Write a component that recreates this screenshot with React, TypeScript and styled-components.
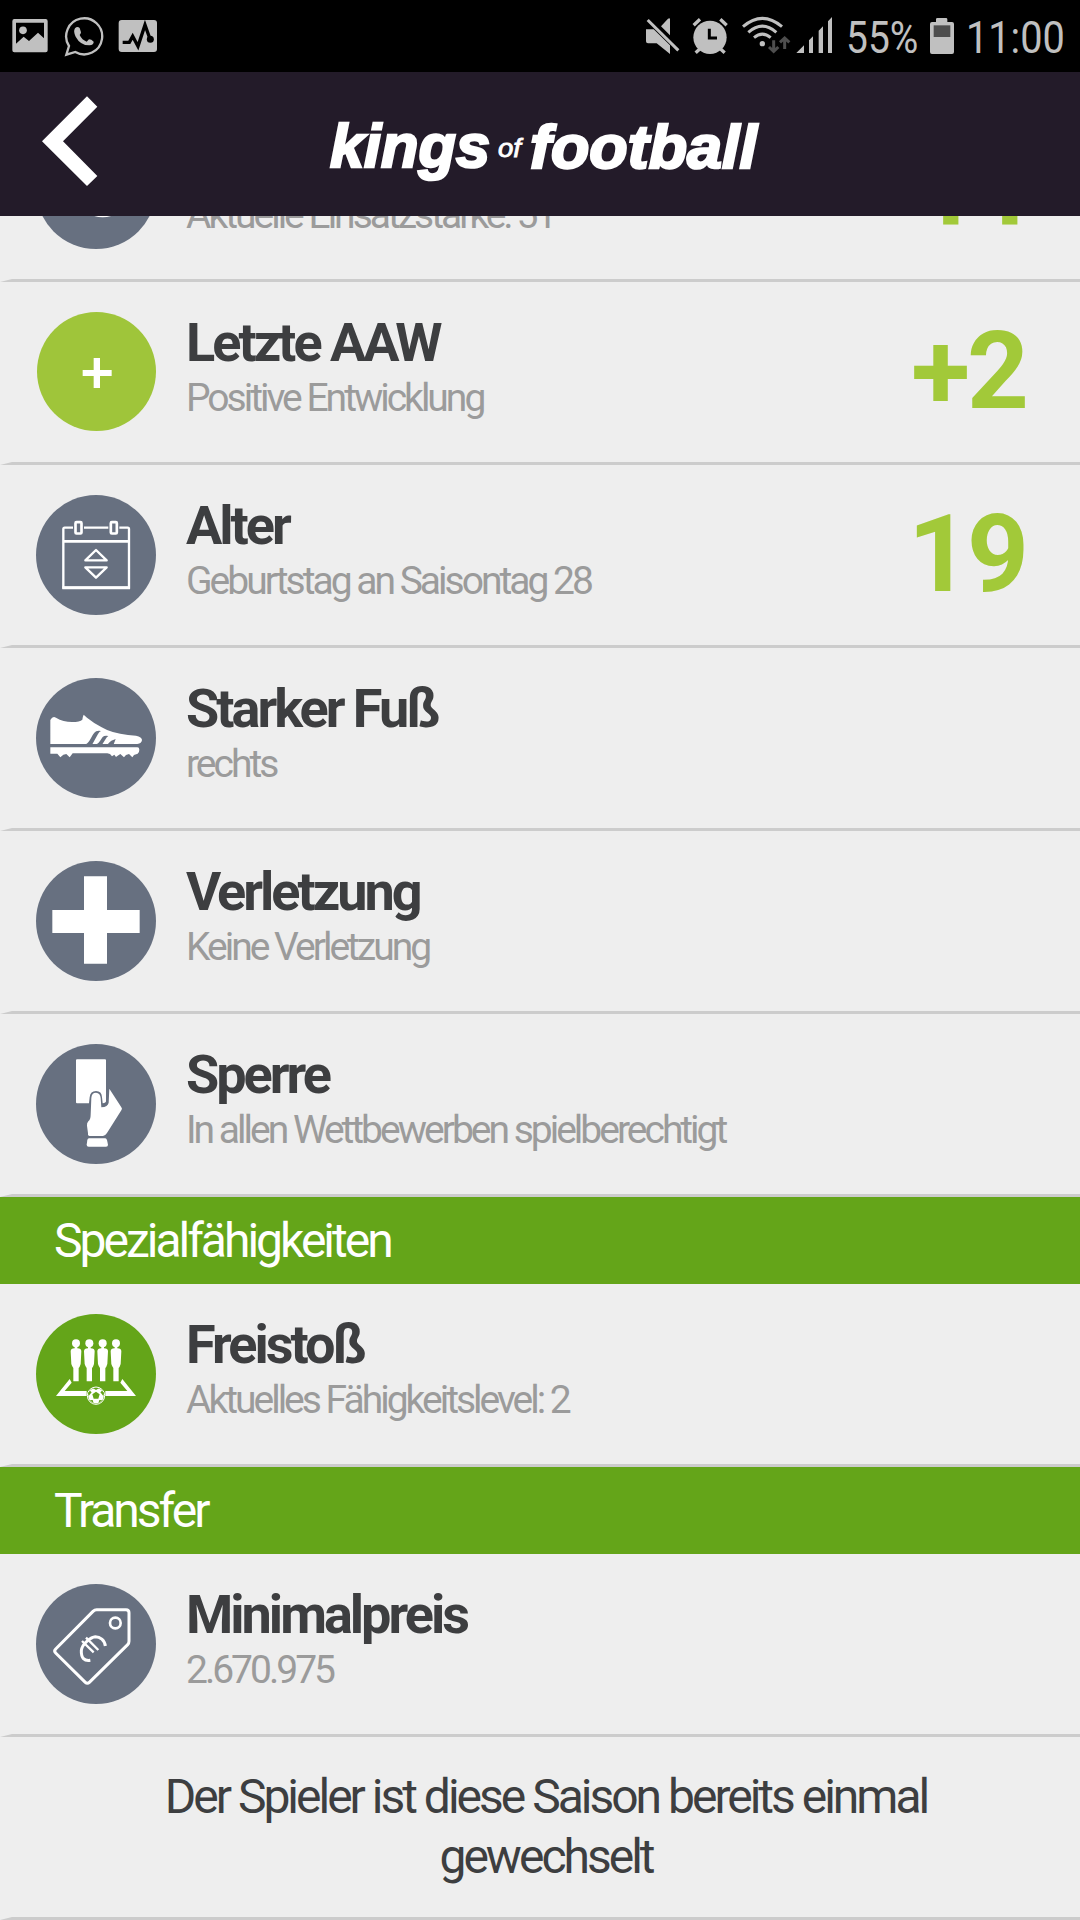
import React from "react";
import styled, { createGlobalStyle } from "styled-components";

const GlobalStyle = createGlobalStyle`
  html, body { margin: 0; padding: 0; background: #eeeeee; }
  * { box-sizing: border-box; }
`;

const Screen = styled.div`
  width: 1080px;
  height: 1920px;
  display: flex;
  flex-direction: column;
  overflow: hidden;
  background: #eeeeee;
  font-family: Roboto, "Liberation Sans", sans-serif;
`;

const StatusBar = styled.div`
  height: 72px;
  flex: none;
  display: flex;
  justify-content: space-between;
  padding: 0 14px 0 12px;
  background: #000;
  color: #c0c0c0;
`;

const StatusGroup = styled.div`
  display: flex;
`;

const StatusIcon = styled.svg<{ $gap?: number }>`
  display: block;
  height: 72px;
  margin-left: ${(p) => p.$gap ?? 0}px;
`;

const StatusText = styled.div<{ $width: number; $gap: number; $scale: number }>`
  width: ${(p) => p.$width}px;
  margin-left: ${(p) => p.$gap}px;
  font-size: 45px;
  line-height: 75px;
  white-space: nowrap;
  span {
    display: inline-block;
    transform: scaleX(${(p) => p.$scale});
    transform-origin: 0 50%;
  }
`;

const Header = styled.header`
  height: 144px;
  flex: none;
  display: flex;
  align-items: center;
  background: #231b29;
`;

const BackArrow = styled.svg`
  display: block;
  width: 60px;
  height: 144px;
  margin-left: 40px;
`;

const Logo = styled.svg`
  display: block;
  width: 450px;
  height: 144px;
  margin-left: 220px;
`;

const List = styled.main`
  flex: 1;
  min-height: 0;
  display: flex;
  flex-direction: column;
  justify-content: flex-end;
  overflow: hidden;
`;

const Row = styled.section`
  flex: none;
  height: 183px;
  display: flex;
  padding: 30px 54px 0 24px;
  border-left: 12px solid transparent;
  border-bottom: 3px solid #cccccc;
`;

const Badge = styled.svg`
  display: block;
  flex: none;
  width: 120px;
  height: 120px;
`;

const Texts = styled.div`
  flex: 1;
  display: flex;
  flex-direction: column;
  justify-content: flex-end;
  height: 110px;
  padding-left: 30px;
  letter-spacing: -3px;
  white-space: nowrap;
`;

const Title = styled.h2`
  margin: 0 0 1px;
  font-size: 54px;
  line-height: 60px;
  font-weight: 700;
  color: #3d3e40;
`;

const Subtitle = styled.div`
  font-size: 39px;
  line-height: 48px;
  color: #9b9b9b;
`;

const Value = styled.div`
  font-size: 108px;
  line-height: 118px;
  font-weight: 700;
  letter-spacing: -3px;
  color: #a2c939;
`;

const SectionBar = styled.div`
  flex: none;
  height: 87px;
  padding-left: 54px;
  font-size: 48px;
  line-height: 87px;
  letter-spacing: -3px;
  color: #fff;
  background: #64a519;
`;

const Message = styled.section`
  flex: none;
  height: 183px;
  padding: 30px 90px 0;
  border-left: 12px solid transparent;
  border-bottom: 3px solid #cccccc;
  font-size: 48px;
  line-height: 60px;
  letter-spacing: -3px;
  text-align: center;
  color: #3d3e40;
`;

const SLATE = "#677080";

type BadgeProps = { color?: string; children: React.ReactNode };

function RoundBadge({ color = SLATE, children }: BadgeProps) {
  return (
    <Badge viewBox="0 0 360 360">
      <circle cx="180" cy="180" r="180" fill={color} />
      {children}
    </Badge>
  );
}

const StrengthIcon = () => (
  <RoundBadge>
    <ellipse cx="200" cy="215" rx="66" ry="50" fill="#fff" />
  </RoundBadge>
);

const PlusIcon = () => (
  <Badge viewBox="0 0 360 360">
    <circle cx="181.500" cy="178.500" r="178.500" fill="#9fc53a" />
    <path d="M173 138h19v36h35v18h-35v36h-19v-36h-33v-18h33z" fill="#fff" />
  </Badge>
);

const CalendarIcon = () => (
  <RoundBadge>
    <g fill="none" stroke="#fff" strokeWidth="7">
      <path d="M111 98H86Q82 98 82 102V278H279V102Q279 98 275 98H250M144 98H217" />
      <path d="M82 139H279" strokeWidth="8" />
      <path d="M79 278H282" strokeWidth="9" />
      <rect x="118.500" y="81.500" width="18" height="34" rx="3" strokeWidth="8" />
      <rect x="224.500" y="81.500" width="18" height="34" rx="3" strokeWidth="8" />
      <path d="M180 165L212 196H148ZM180 248L212 217H148Z" strokeLinejoin="round" />
    </g>
  </RoundBadge>
);

const ShoeIcon = () => (
  <RoundBadge>
    <g transform="translate(-108 -84)">
      <path
        fill="#fff"
        d="M151 282V210Q158 197 168 203Q190 216 216 216Q240 216 247 209Q248 200 251 194L261 203Q285 222 305 232Q335 250 384 255L408 257Q426 261 426 270Q425 280 412 282Z"
      />
      <path
        fill={SLATE}
        d="M257 283C269 277 275 257 283 248Q288 241 303 243Q298 245 294 252L277 283ZM290 283C299 278 303 267 308 261Q313 256 325 258Q320 261 317 267L307 283ZM323 283Q329 276 334 272L347 267L341 283Z"
      />
      <path
        fill="#fff"
        d="M151 292H412Q418 292 418 299Q418 308 413 311L402 315L397 322L387 312L378 315L372 322L361 312L353 317L348 321L343 314L336 319L330 312L322 310H218L209 322L199 312L190 314L181 322L172 311H151Z"
      />
    </g>
  </RoundBadge>
);

const CrossIcon = () => (
  <RoundBadge>
    <path d="M144 46h69v101h98v69h-98v92h-69v-92H49v-69h95z" fill="#fff" />
  </RoundBadge>
);

const CardIcon = () => (
  <RoundBadge>
    <g transform="translate(-108 -102)" fill="#fff">
      <path d="M231 148H315Q318 148 318 151V274Q318 279 308 280L306 262Q305 243 288 243Q271 243 269 262L267 280H231Q228 280 228 277V151Q228 148 231 148Z" />
      <path d="M274 264Q275 248 288 248Q301 249 302 264L304 292Q324 290 326 278L328 236L364 292Q368 296 364 301L321 369Q315 378 309 378H269Q263 378 264 370L261 347Q260 339 265 334Q272 328 272 314Z" />
      <path d="M267 385H316Q319 385 321 390L324 404Q324 410 318 410H266Q260 410 260 404L262 390Q263 385 267 385Z" />
    </g>
  </RoundBadge>
);

const WallIcon = () => (
  <RoundBadge color="#64a519">
    {[120, 160, 200, 240].map((x) => (
      <g key={x} fill="#fff" transform={`translate(${x} 0)`}>
        <circle cx="0" cy="88" r="12" />
        <path d="M-4 96H4V103Q16 103 16 112L14 150Q11 160 8 162V202H-8V162Q-12 157 -14 150L-16 112Q-16 103 -4 103Z" />
      </g>
    ))}
    <path fill="#fff" d="M101 195L107 206L86 231H152V246H60ZM259 195L253 206L274 231H208V246H300Z" />
    <circle cx="180" cy="245" r="25" fill="#fff" stroke="#64a519" strokeWidth="3" />
    <circle cx="180" cy="245" r="26" fill="none" stroke="#fff" strokeWidth="3" />
    <path
      fill="#64a519"
      d="M180 233L191 241L187 254H173L169 241ZM170 222H190L180 228ZM156 237L162 230L167 235L158 246ZM204 237L198 230L193 235L202 246ZM161 259L170 258L173 268ZM199 259L190 258L187 268Z"
    />
  </RoundBadge>
);

const TagIcon = () => (
  <RoundBadge>
    <g transform="translate(-108 -372)" fill="none" stroke="#fff" strokeWidth="9">
      <path d="M290 449H378Q387 449 387 458V544Q387 550 383 554L268 667Q262 673 256 667L167 579Q161 573 167 567L279 454Q284 449 290 449Z" />
      <circle cx="346" cy="489" r="16" strokeWidth="8" />
      <path
        strokeWidth="9"
        d="M316 558C314 540 300 530 286 530C274 531 246 550 244 572C243 594 253 604 271 601"
      />
      <path strokeWidth="7" d="M246 543L281 577M258 533L295 570" />
    </g>
  </RoundBadge>
);

type EntryProps = { icon: React.ReactNode; title?: string; subtitle: string; value?: string };

function Entry({ icon, title, subtitle, value }: EntryProps) {
  return (
    <Row>
      {icon}
      <Texts>
        {title && <Title>{title}</Title>}
        <Subtitle>{subtitle}</Subtitle>
      </Texts>
      {value && <Value>{value}</Value>}
    </Row>
  );
}

function AndroidStatus() {
  return (
    <StatusBar>
      <StatusGroup>
        <StatusIcon width="36" viewBox="36 0 108 216" fill="#c0c0c0">
          <path
            fillRule="evenodd"
            d="M43 57H137Q143 57 143 64V151Q143 157 137 157H43Q37 157 37 151V64Q37 57 43 57ZM48 68V131L71 110L87 123L114 98L132 115V68Z"
          />
          <circle cx="69" cy="91" r="11.500" />
        </StatusIcon>
        <StatusIcon $gap={16} width="40" viewBox="192 0 120 216" fill="#c0c0c0">
          <path d="M207 138A54 54 0 1 1 226 156L199 164Z" fill="none" stroke="#c0c0c0" strokeWidth="7" />
          <path d="M225 85Q232 77 239 84L243 97Q243 101 239 105Q246 120 260 125L267 118Q274 118 281 125Q282 134 268 136Q241 136 227 110Q219 94 225 85Z" />
        </StatusIcon>
        <StatusIcon $gap={14} width="40" viewBox="354 0 120 216">
          <rect x="356" y="60" width="115" height="96" rx="9" fill="#c0c0c0" />
          <path d="M368 127H388L398 109L414 139L435 75L450 117" fill="none" stroke="#000" strokeWidth="10" />
          <circle cx="451" cy="118" r="10.500" />
        </StatusIcon>
      </StatusGroup>
      <StatusGroup>
        <StatusIcon width="34" viewBox="78 0 102 216" fill="#c0c0c0">
          <path d="M78 88H101L150 136V162L110 130H84Q78 130 78 124ZM123 79L144 56Q150 52 150 58V106Z" />
          <path d="M83 60L175 151" stroke="#c0c0c0" strokeWidth="9" />
        </StatusIcon>
        <StatusIcon $gap={12} width="36" viewBox="216 0 108 216" fill="#c0c0c0">
          <circle cx="270" cy="112" r="50" />
          <path d="M221 76L240 58M320 76L301 58M227 158L240 146M314 158L301 146" stroke="#c0c0c0" strokeWidth="10" />
          <path d="M268 86V114H291" fill="none" stroke="#000" strokeWidth="9" />
        </StatusIcon>
        <StatusIcon $gap={14} width="49" viewBox="366 0 147 216" fill="none" stroke="#c0c0c0" strokeWidth="9">
          <path d="M369 80Q427 30 486 80M385 97Q427 60 469 97M402 113Q427 92 452 113" />
          <circle cx="427" cy="131" r="8" fill="#c0c0c0" stroke="none" />
          <path d="M461 121V152M447 141L461 154L475 141M494 147V116M480 127L494 114L508 127" stroke="#4e4e4e" />
        </StatusIcon>
        <StatusIcon $gap={5} width="37" viewBox="528 0 111 216" fill="#c0c0c0">
          <path d="M529 159L552 136V159ZM567 159V121L579 109V159ZM596 159V92L609 79V159ZM624 159V64L636 51V159Z" />
        </StatusIcon>
        <StatusText $gap={13} $width={83} $scale={0.865}>
          <span>55%</span>
        </StatusText>
        <StatusIcon width="26" viewBox="927 0 78 216" fill="#c0c0c0">
          <path d="M948 66V58Q948 54 952 54H978Q982 54 982 58V66H996Q1002 66 1002 72V156Q1002 162 996 162H936Q930 162 930 156V72Q930 66 936 66Z" />
          <path d="M941 76H991V111H941Z" fill="#4e4e4e" />
        </StatusIcon>
        <StatusText $gap={11} $width={100} $scale={0.882}>
          <span>11:00</span>
        </StatusText>
      </StatusGroup>
    </StatusBar>
  );
}

const logoFont = {
  fontFamily: '"Liberation Sans", Arial, sans-serif',
  fontStyle: "italic",
  fill: "#fff",
  stroke: "#fff",
  lengthAdjust: "spacingAndGlyphs",
} as const;

export default function App() {
  return (
    <Screen>
      <GlobalStyle />
      <AndroidStatus />
      <Header>
        <BackArrow viewBox="120 216 180 432">
          <path d="M261 289L292 320L189 424L292 528L261 558L126 424Z" fill="#fff" />
        </BackArrow>
        <Logo viewBox="320 72 450 144">
          <text x="330" y="167" fontSize="62" fontWeight="700" textLength="160" strokeWidth="2.500" {...logoFont}>
            kings
          </text>
          <text x="498" y="157" fontSize="25" fontWeight="400" textLength="23" strokeWidth="0.800" {...logoFont}>
            of
          </text>
          <text x="530" y="168" fontSize="62" fontWeight="700" textLength="227" strokeWidth="2.500" {...logoFont}>
            football
          </text>
        </Logo>
      </Header>
      <List>
        <Entry icon={<StrengthIcon />} subtitle="Aktuelle Einsatzstärke: 51" value="44" />
        <Entry icon={<PlusIcon />} title="Letzte AAW" subtitle="Positive Entwicklung" value="+2" />
        <Entry icon={<CalendarIcon />} title="Alter" subtitle="Geburtstag an Saisontag 28" value="19" />
        <Entry icon={<ShoeIcon />} title="Starker Fuß" subtitle="rechts" />
        <Entry icon={<CrossIcon />} title="Verletzung" subtitle="Keine Verletzung" />
        <Entry icon={<CardIcon />} title="Sperre" subtitle="In allen Wettbewerben spielberechtigt" />
        <SectionBar>Spezialfähigkeiten</SectionBar>
        <Entry icon={<WallIcon />} title="Freistoß" subtitle="Aktuelles Fähigkeitslevel: 2" />
        <SectionBar>Transfer</SectionBar>
        <Entry icon={<TagIcon />} title="Minimalpreis" subtitle="2.670.975" />
        <Message>Der Spieler ist diese Saison bereits einmal gewechselt</Message>
      </List>
    </Screen>
  );
}
